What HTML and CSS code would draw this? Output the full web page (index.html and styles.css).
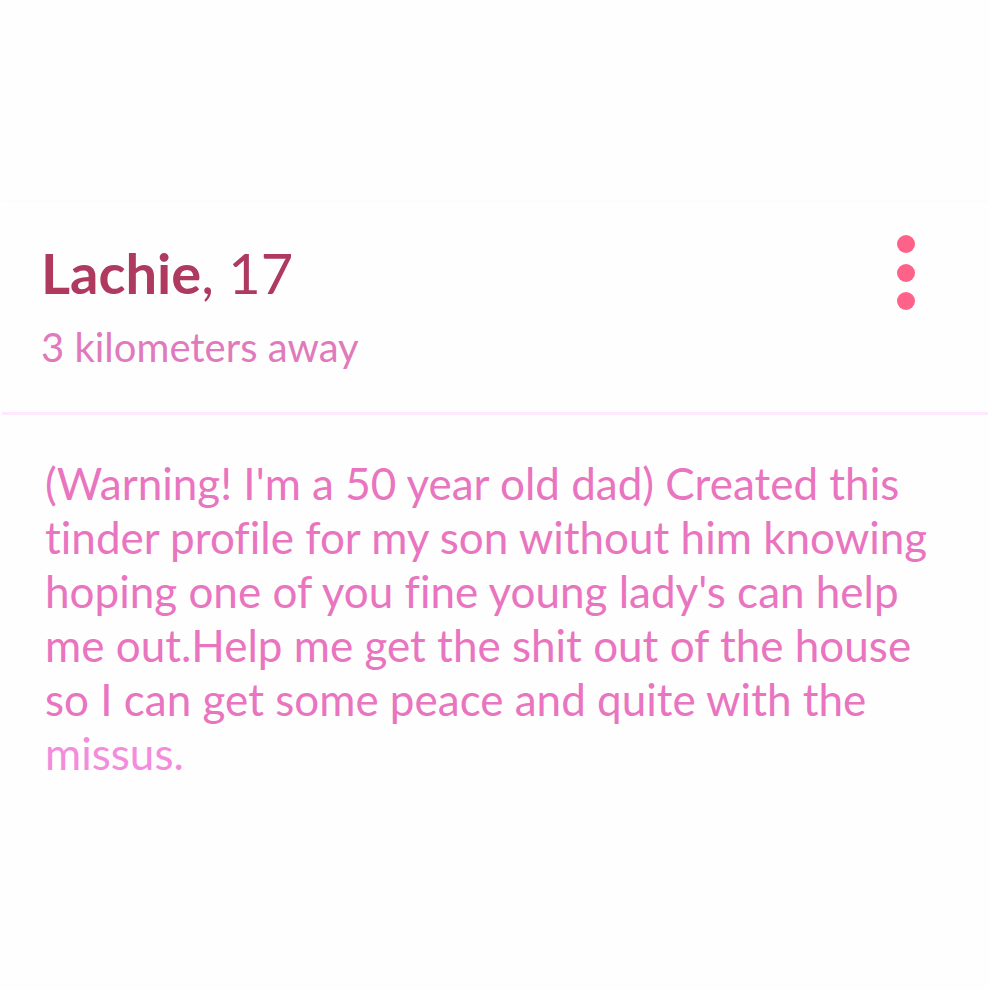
FILE: index.html
```html
<!DOCTYPE html>
<html lang="en">
<head>
<meta charset="utf-8">
<meta name="viewport" content="width=device-width, initial-scale=1">
<title>Lachie, 17</title>
<link rel="stylesheet" href="styles.css">
</head>
<body>
<main class="profile">
  <header class="profile-header">
    <div>
      <h1 class="name"><strong>Lachie</strong>, 17</h1>
      <p class="distance">3 kilometers away</p>
    </div>
    <button class="menu" type="button" aria-label="More options">
      <svg width="20" height="80" viewBox="0 0 20 80" aria-hidden="true">
        <circle cx="10" cy="11" r="9"/><circle cx="10" cy="40" r="9"/><circle cx="10" cy="68" r="9"/>
      </svg>
    </button>
  </header>
  <p class="bio">
    <span class="line">(Warning! I'm a 50 year old dad) Created this</span>
    <span class="line">tinder profile for my son without him knowing</span>
    <span class="line">hoping one of you fine young lady's can help</span>
    <span class="line">me out.Help me get the shit out of the house</span>
    <span class="line">so I can get some peace and quite with the</span>
    <span class="line last">missus.</span>
  </p>
</main>
</body>
</html>
```
FILE: styles.css
```css
* { box-sizing: border-box; }
body {
  margin: 0;
  background: #fefefe;
  font-family: Lato, "Liberation Sans", sans-serif;
  font-variant-ligatures: none;
}
.profile { padding: 200px 2px 0; }
.profile-header {
  display: flex;
  justify-content: space-between;
  align-items: flex-start;
  border-top: 2px solid #fefbfe;
  border-bottom: 3px solid #fde8fe;
  padding: 31px 72px 43px 39px;
}
.name {
  margin: 10px 0 0;
  font-size: 56px;
  line-height: 60px;
  font-weight: 400;
  color: #ae3a60;
}
.name strong { font-weight: 700; }
.distance {
  margin: 22px 0 0;
  font-size: 40px;
  line-height: 44px;
  color: #e07abc;
}
.menu {
  padding: 0;
  border: 0;
  background: none;
  line-height: 0;
}
.menu svg { fill: #ff6288; }
.bio {
  margin: 0;
  padding: 41px 20px 40px 43px;
  font-size: 44px;
  line-height: 54px;
  color: #e974c0;
}
.line { display: block; }
.last { color: #f38cdc; }
```
